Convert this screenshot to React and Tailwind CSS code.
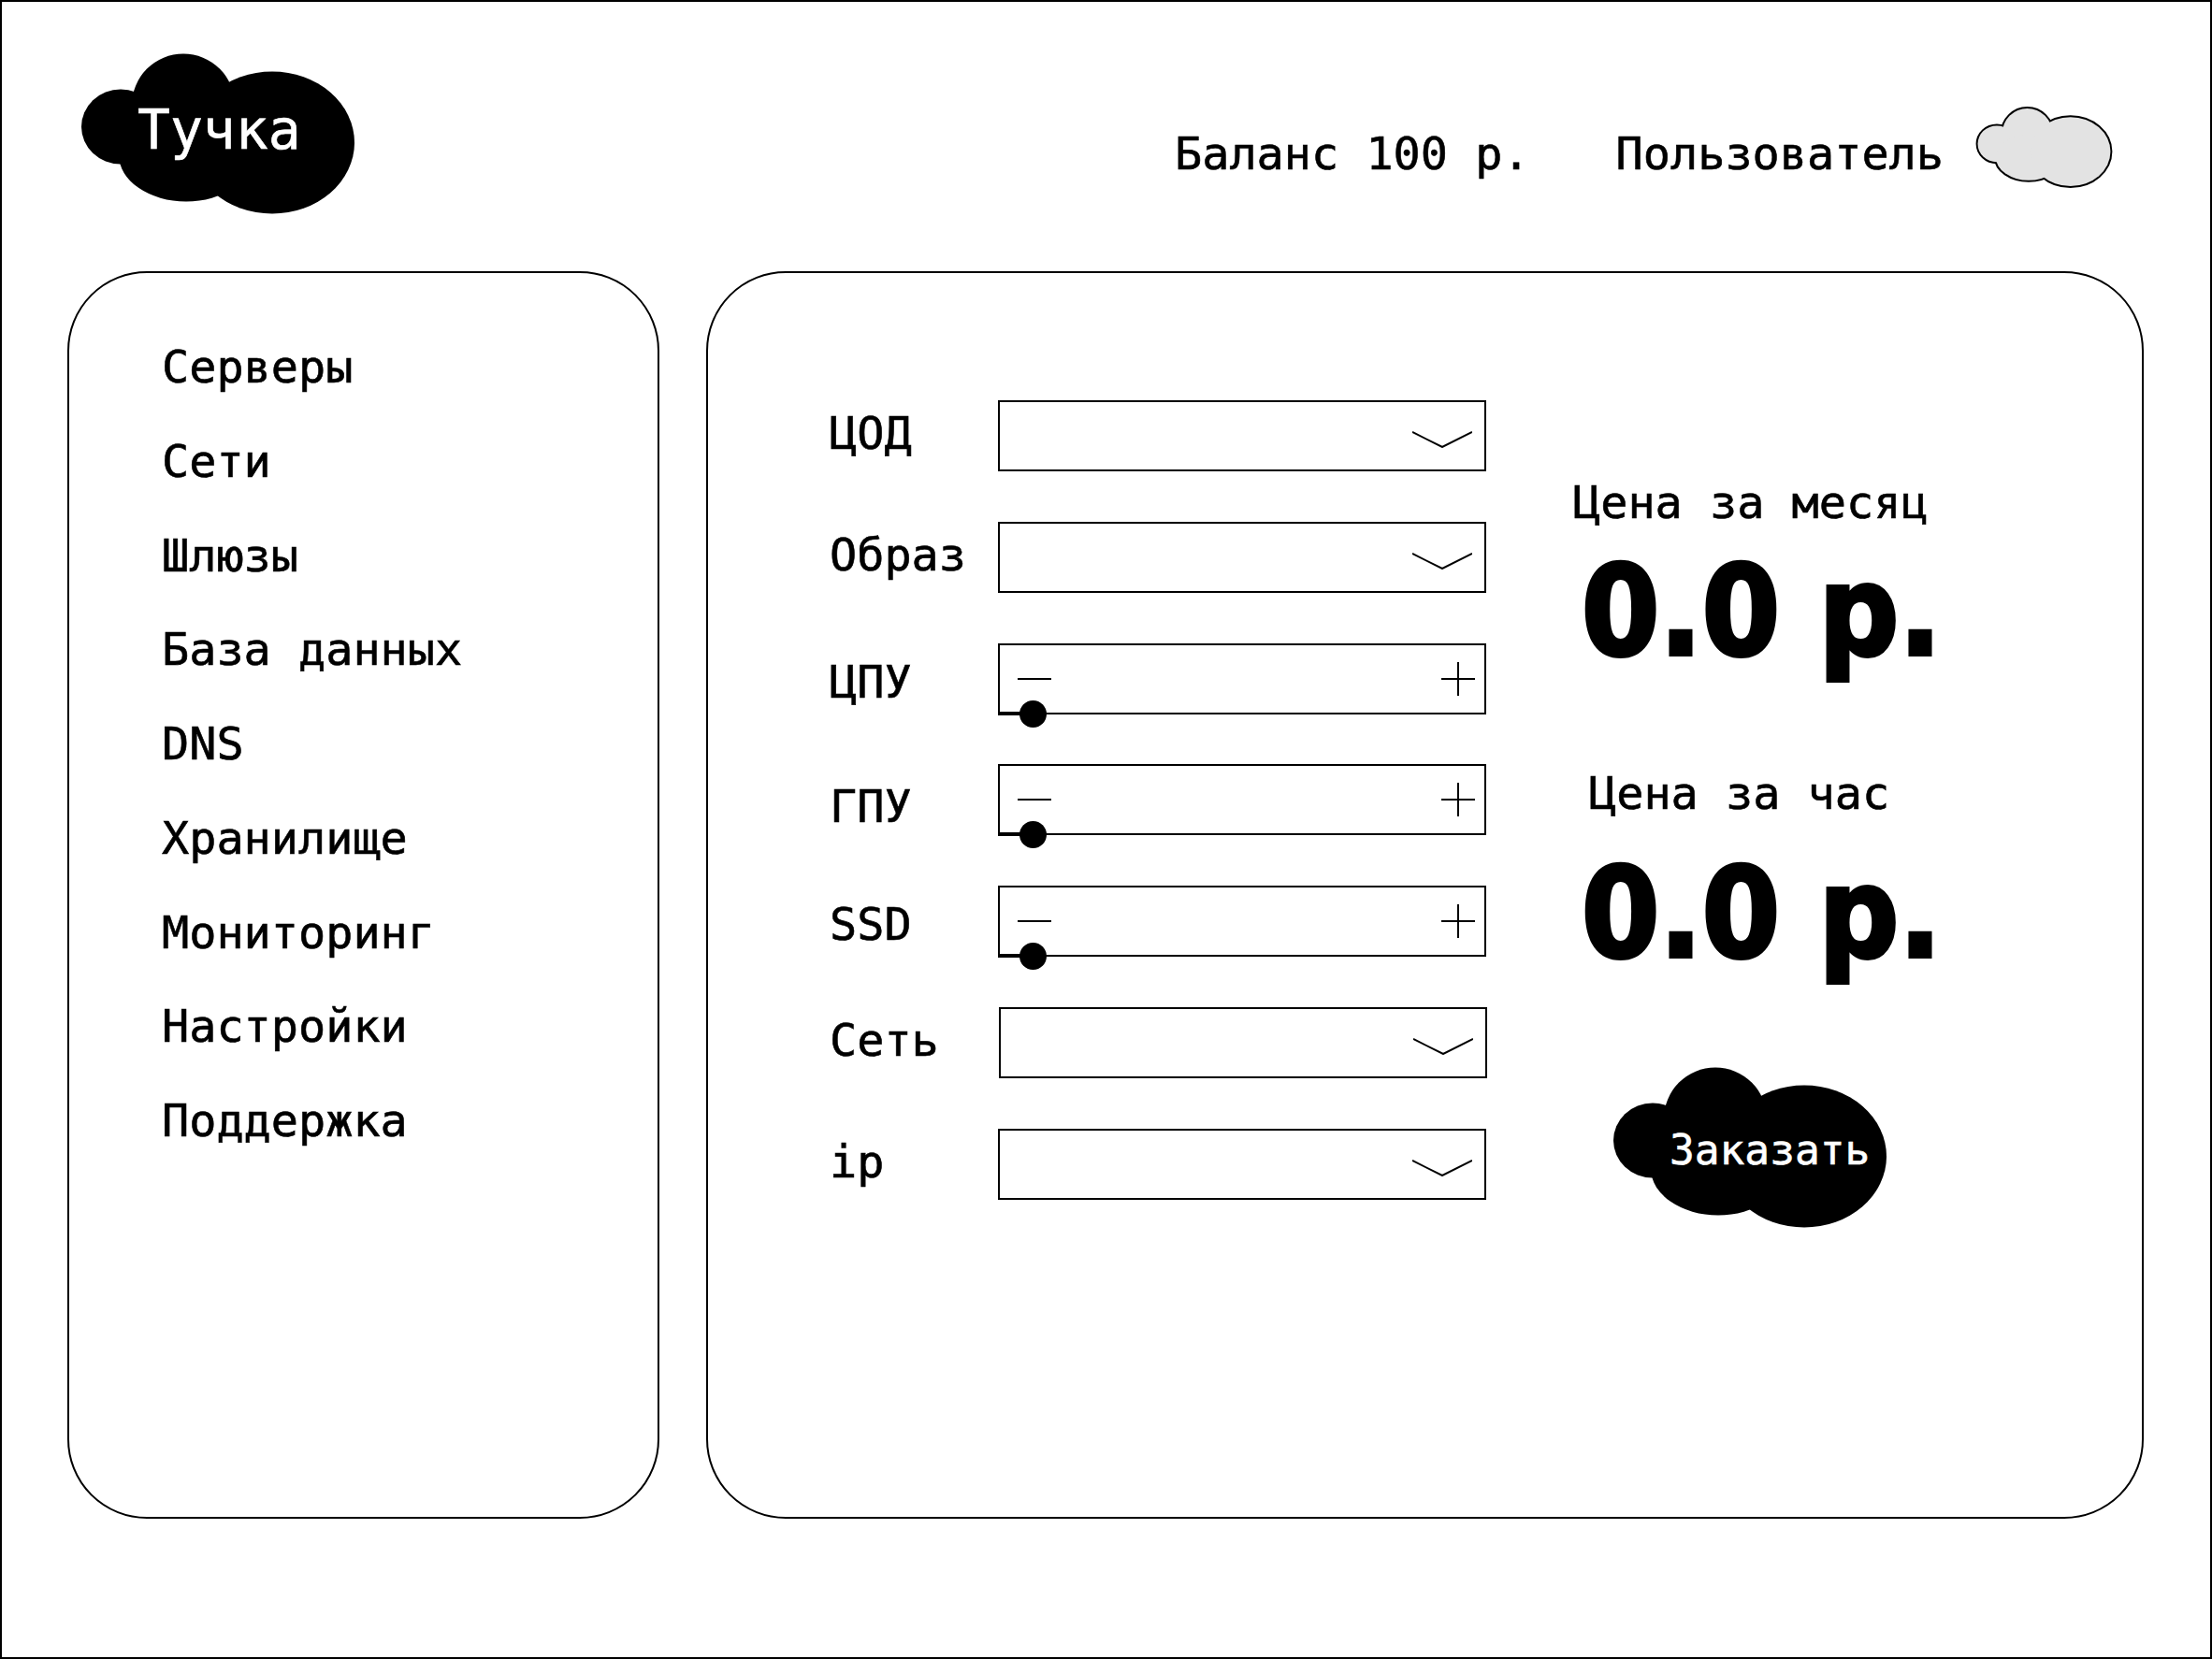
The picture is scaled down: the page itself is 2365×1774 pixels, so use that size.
const mono = "font-['DejaVu_Sans_Mono',monospace]";

const menu = ["Серверы", "Сети", "Шлюзы", "База данных", "DNS", "Хранилище", "Мониторинг", "Настройки", "Поддержка"];

const fields = [
  { label: "ЦОД", type: "select", labelClass: "mb-[6px]" },
  { label: "Образ", type: "select", labelClass: "mb-[6px]" },
  { label: "ЦПУ", type: "slider", labelClass: "mt-[6px]" },
  { label: "ГПУ", type: "slider", labelClass: "mt-[14px]" },
  { label: "SSD", type: "slider", labelClass: "mt-[6px]" },
  { label: "Сеть", type: "select", labelClass: "mb-[6px]", boxClass: "ml-px" },
  { label: "ip", type: "select", labelClass: "mb-[6px]" },
];

function CloudShapes(props) {
  return (
    <g {...props}>
      <ellipse cx="42" cy="78" rx="42" ry="40" />
      <ellipse cx="109" cy="55" rx="55" ry="55" />
      <ellipse cx="112" cy="108" rx="72" ry="50" />
      <ellipse cx="204" cy="95" rx="88" ry="76" />
    </g>
  );
}

function Cloud({ className, children }) {
  return (
    <div className={`relative ${className}`}>
      <svg viewBox="0 0 292 171" className="block w-full h-full">
        <CloudShapes fill="#000" />
      </svg>
      {children}
    </div>
  );
}

function UserCloud() {
  return (
    <svg viewBox="-4 -4 300 179" className="block w-[147px] h-[87px]">
      <CloudShapes fill="#e3e3e3" stroke="#000" strokeWidth="8" />
      <CloudShapes fill="#e3e3e3" />
    </svg>
  );
}

function SelectBox({ className = "" }) {
  return (
    <div className={`relative w-[522px] h-[76px] border-2 border-black ${className}`}>
      <svg viewBox="0 0 64 18" className="absolute right-[13px] top-[31px] w-[64px] h-[18px]" fill="none" stroke="#000" strokeWidth="2">
        <path d="M0 1 L32 17 L64 1" />
      </svg>
    </div>
  );
}

function SliderBox() {
  return (
    <div className="relative w-[522px] h-[76px] border-2 border-black">
      <svg viewBox="0 0 36 36" className="absolute left-[19px] top-[18px] w-[36px] h-[36px]" fill="none" stroke="#000" strokeWidth="2">
        <path d="M0 18 H36" />
      </svg>
      <svg viewBox="0 0 36 36" className="absolute right-[10px] top-[18px] w-[36px] h-[36px]" fill="none" stroke="#000" strokeWidth="2">
        <path d="M0 18 H36 M18 0 V36" />
      </svg>
      <div className="absolute left-[-2px] bottom-[-3px] w-[30px] h-[4px] bg-black" />
      <div className="absolute left-[21px] bottom-[-16px] w-[29px] h-[29px] rounded-full bg-black" />
    </div>
  );
}

function Price({ label, labelClass = "", valueClass = "", className = "" }) {
  return (
    <div className={className}>
      <div className={`text-[48.5px] leading-[56px] text-black ${labelClass}`}>{label}</div>
      <div className={`ml-[9px] font-['DejaVu_Sans_Condensed',sans-serif] font-bold text-[133px] leading-[120px] [-webkit-text-stroke-width:4px] text-black whitespace-nowrap ${valueClass}`}>
        0.0 р.
      </div>
    </div>
  );
}

export default function App() {
  return (
    <div className={`w-[2365px] h-[1774px] border-2 border-black bg-white text-black [-webkit-text-stroke-width:0.6px] ${mono}`}>
      {/* Header */}
      <div className="flex justify-between h-[288px] pl-[85px] pr-[104px]">
        <Cloud className="w-[292px] h-[172px] mt-[55px]">
          <span className="absolute left-[60px] top-[48px] text-[58px] leading-[68px] text-white">Тучка</span>
        </Cloud>
        <div className="flex items-start mt-[112px]">
          <span className="mt-[22px] text-[48.5px] leading-[56px]">Баланс 100 р.</span>
          <span className="mt-[22px] ml-[92px] text-[48.5px] leading-[56px]">Пользователь</span>
          <div className="ml-[34px]">
            <UserCloud />
          </div>
        </div>
      </div>

      {/* Panels */}
      <div className="flex gap-[50px] pl-[70px]">
        <div className="w-[633px] h-[1334px] rounded-[85px] border-2 border-black pt-[50px] pl-[99px]">
          {menu.map((item) => (
            <div key={item} className="flex items-center h-[100.75px] text-[48.5px]">
              {item}
            </div>
          ))}
        </div>

        <div className="flex w-[1537px] h-[1334px] rounded-[85px] border-2 border-black pt-[136px] pl-[130px]">
          <div className="flex flex-col gap-[53.8px]">
            {fields.map((f) => (
              <div key={f.label} className="flex items-center">
                <span className={`w-[180px] text-[48.5px] leading-[56px] ${f.labelClass}`}>{f.label}</span>
                {f.type === "select" ? <SelectBox className={f.boxClass} /> : <SliderBox />}
              </div>
            ))}
          </div>

          <div className="ml-[92px] pt-[81px]">
            <Price label="Цена за месяц" valueClass="mt-[29px]" />
            <Price label="Цена за час" labelClass="ml-[17px]" valueClass="mt-[41px]" className="mt-[106px]" />
            <Cloud className="w-[292px] h-[172px] ml-[43px] mt-[104px]">
              <span className="absolute left-[60px] top-[63px] text-[44.5px] leading-[52px] text-white">Заказать</span>
            </Cloud>
          </div>
        </div>
      </div>
    </div>
  );
}
